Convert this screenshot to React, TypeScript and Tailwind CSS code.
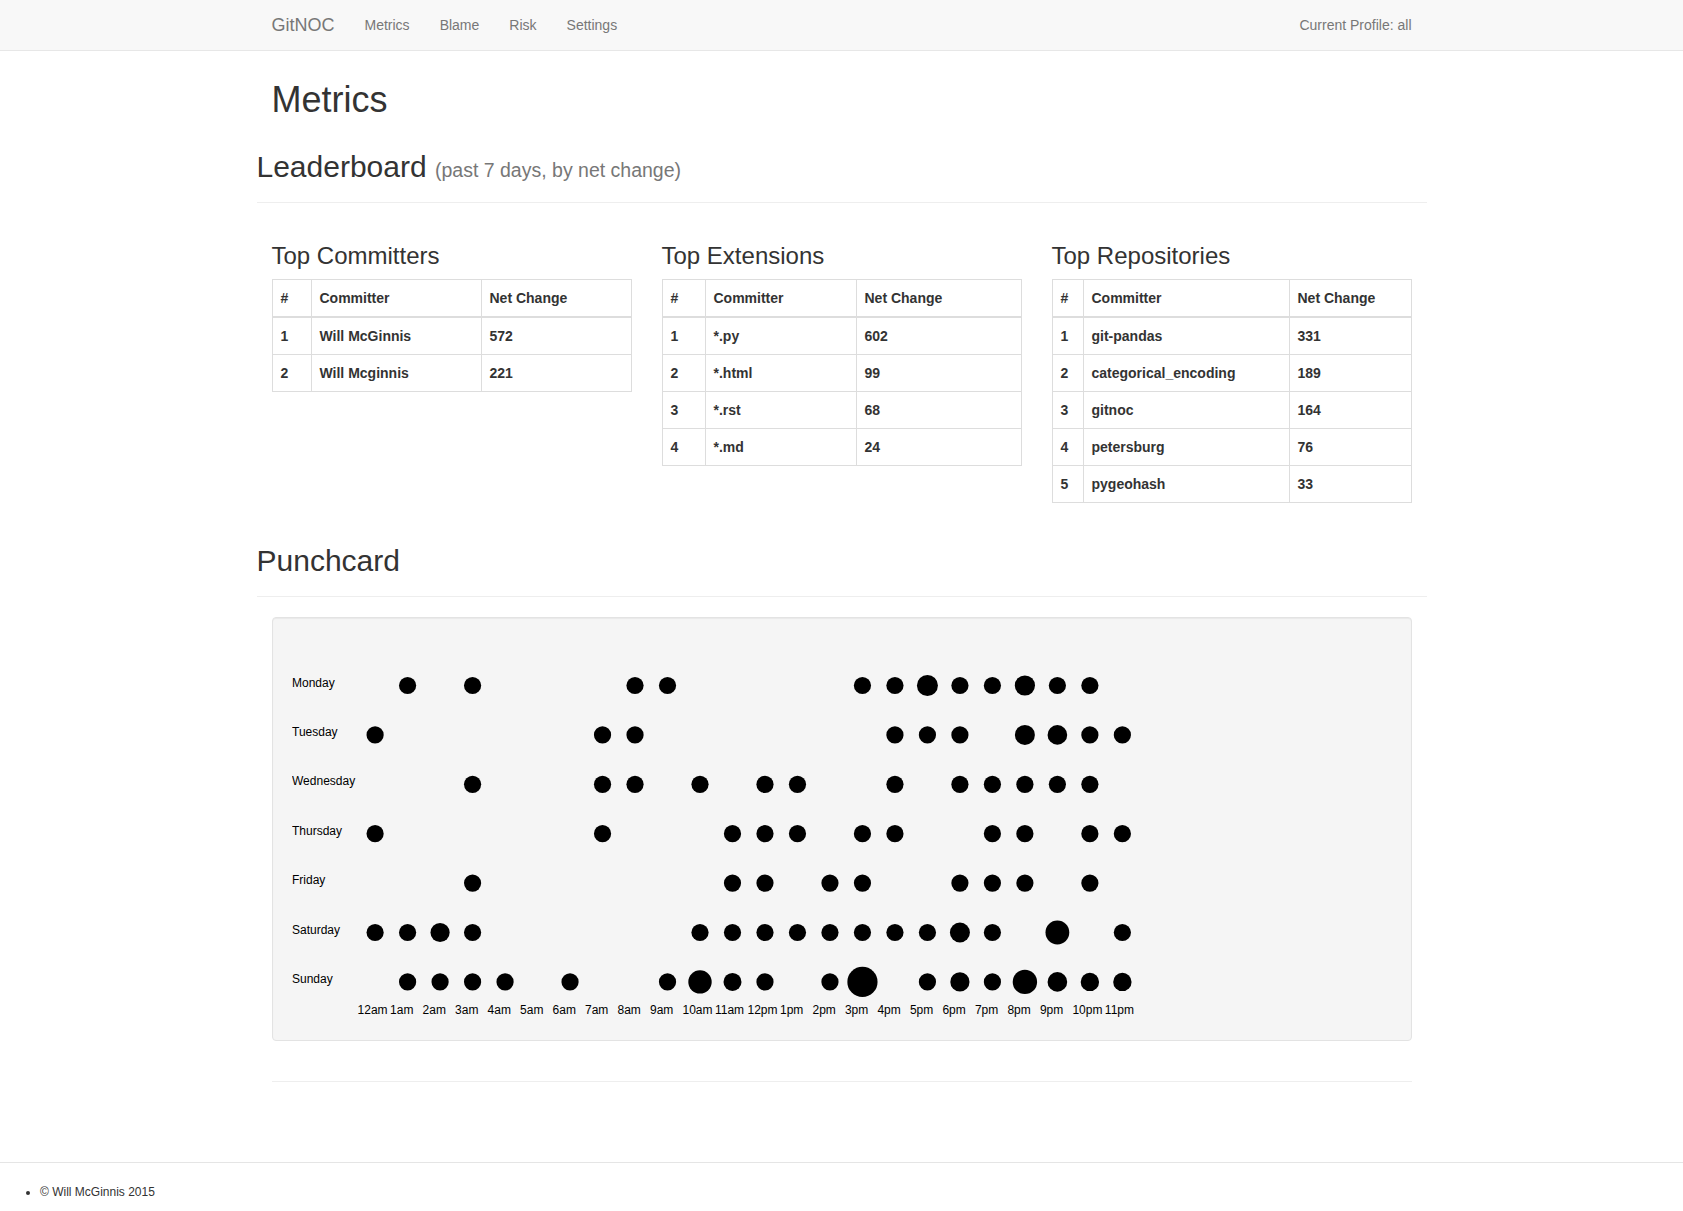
import React from "react";

const R = 8.6;
const days = ["Monday", "Tuesday", "Wednesday", "Thursday", "Friday", "Saturday", "Sunday"];
const hours = [
  "12am", "1am", "2am", "3am", "4am", "5am", "6am", "7am", "8am", "9am", "10am", "11am",
  "12pm", "1pm", "2pm", "3pm", "4pm", "5pm", "6pm", "7pm", "8pm", "9pm", "10pm", "11pm",
];
const punch: Array<Array<[number, number]>> = [
  [[1, R], [3, R], [8, R], [9, R], [15, R], [16, R], [17, 10.5], [18, R], [19, R], [20, 10.1], [21, R], [22, R]],
  [[0, R], [7, R], [8, R], [16, R], [17, R], [18, R], [20, 10], [21, 9.8], [22, R], [23, R]],
  [[3, R], [7, R], [8, R], [10, R], [12, R], [13, R], [16, R], [18, R], [19, R], [20, R], [21, R], [22, R]],
  [[0, R], [7, R], [11, R], [12, R], [13, R], [15, R], [16, R], [19, R], [20, R], [22, R], [23, R]],
  [[3, R], [11, R], [12, R], [14, R], [15, R], [18, R], [19, R], [20, R], [22, R]],
  [[0, R], [1, R], [2, 9.6], [3, R], [10, R], [11, R], [12, R], [13, R], [14, R], [15, R], [16, R], [17, R], [18, 10], [19, R], [21, 11.9], [23, R]],
  [[1, R], [2, R], [3, R], [4, R], [6, R], [9, R], [10, 11.7], [11, 9], [12, R], [14, R], [15, 15.1], [17, R], [18, 9.6], [19, R], [20, 12.2], [21, 9.8], [22, 9.2], [23, 9.2]],
];

const X0 = 83.1;
const DX = 32.49;
const Y0 = 48.5;
const DY = 49.4;

type Table = { title: string; widths: [string, string]; rows: [string, string][] };

const tables: Table[] = [
  {
    title: "Top Committers",
    widths: ["w-[39px]", "w-[170px]"],
    rows: [
      ["Will McGinnis", "572"],
      ["Will Mcginnis", "221"],
    ],
  },
  {
    title: "Top Extensions",
    widths: ["w-[43px]", "w-[151px]"],
    rows: [
      ["*.py", "602"],
      ["*.html", "99"],
      ["*.rst", "68"],
      ["*.md", "24"],
    ],
  },
  {
    title: "Top Repositories",
    widths: ["w-[31px]", "w-[206px]"],
    rows: [
      ["git-pandas", "331"],
      ["categorical_encoding", "189"],
      ["gitnoc", "164"],
      ["petersburg", "76"],
      ["pygeohash", "33"],
    ],
  },
];

function Punchcard() {
  return (
    <svg width={1100} height={384} className="block" style={{ fontFamily: "'Liberation Sans', Arial, sans-serif" }}>
      {days.map((d, j) => (
        <text key={d} x={0} y={Y0 + DY * j + 1} fontSize={12} fill="#000">
          {d}
        </text>
      ))}
      {punch.map((row, j) =>
        row.map(([h, r]) => (
          <circle key={`${j}-${h}`} cx={X0 + DX * h} cy={Y0 + DY * j} r={r} fill="#000" />
        ))
      )}
      {hours.map((h, i) => (
        <text key={h} x={X0 + DX * i - 17.5} y={376.5} fontSize={12} fill="#000">
          {h}
        </text>
      ))}
    </svg>
  );
}

export default function App() {
  return (
    <div className="font-['Liberation_Sans',Arial,sans-serif] text-[14px] leading-[20px] text-[#333] bg-white">
      <nav className="h-[51px] bg-[#f8f8f8] border-b border-[#e7e7e7]">
        <div className="w-[1170px] mx-auto flex justify-between">
          <div className="flex">
            <a className="block px-[15px] py-[15px] text-[18px] leading-[20px] text-[#777]">GitNOC</a>
            <ul className="flex">
              {["Metrics", "Blame", "Risk", "Settings"].map((l) => (
                <li key={l}>
                  <a className="block px-[15px] py-[15px] leading-[20px] text-[#777]">{l}</a>
                </li>
              ))}
            </ul>
          </div>
          <a className="block px-[15px] py-[15px] leading-[20px] text-[#777]">Current Profile: all</a>
        </div>
      </nav>

      <div className="w-[1170px] mx-auto">
        <h1 className="mt-[29px] px-[15px] text-[36px] leading-[1.1] font-normal">Metrics</h1>

        <div className="mt-[30.4px] pb-[9px] border-b border-[#eee]">
          <h2 className="mb-[10px] text-[30px] leading-[1.1] font-normal">
            Leaderboard <small className="text-[19.5px] text-[#777]">(past 7 days, by net change)</small>
          </h2>
        </div>

        <div className="flex mt-[40px]">
          {tables.map((t) => (
            <div key={t.title} className="w-[390px] px-[15px]">
              <h3 className="mb-[9.6px] text-[24px] leading-[1.1] font-normal">{t.title}</h3>
              <table className="w-full table-fixed border-collapse border border-[#ddd] font-bold">
                <colgroup>
                  <col className={t.widths[0]} />
                  <col className={t.widths[1]} />
                  <col />
                </colgroup>
                <thead>
                  <tr>
                    <th className="border border-[#ddd] border-b-2 p-2 text-left font-bold">#</th>
                    <th className="border border-[#ddd] border-b-2 p-2 text-left font-bold">Committer</th>
                    <th className="border border-[#ddd] border-b-2 p-2 text-left font-bold">Net Change</th>
                  </tr>
                </thead>
                <tbody>
                  {t.rows.map((r, i) => (
                    <tr key={i}>
                      <td className="border border-[#ddd] p-2">{i + 1}</td>
                      <td className="border border-[#ddd] p-2">{r[0]}</td>
                      <td className="border border-[#ddd] p-2">{r[1]}</td>
                    </tr>
                  ))}
                </tbody>
              </table>
            </div>
          ))}
        </div>

        <div className="mt-[41.5px] pb-[9px] border-b border-[#eee]">
          <h2 className="mb-[10px] text-[30px] leading-[1.1] font-normal">Punchcard</h2>
        </div>

        <div className="px-[15px] pt-[20px] pb-[20px]">
          <div className="p-[19px] bg-[#f5f5f5] border border-[#e3e3e3] rounded-[4px] shadow-[inset_0_1px_1px_rgba(0,0,0,0.05)]">
            <Punchcard />
          </div>
          <div className="mt-[40px] border-t border-[#eee]" />
        </div>
      </div>

      <footer className="mt-[60px] border-t border-[#e5e5e5] pt-[20.5px] pb-[10px]">
        <ul className="list-disc pl-[40px] text-[12px] leading-[17px] text-[#333]">
          <li>© Will McGinnis 2015</li>
        </ul>
      </footer>
    </div>
  );
}
